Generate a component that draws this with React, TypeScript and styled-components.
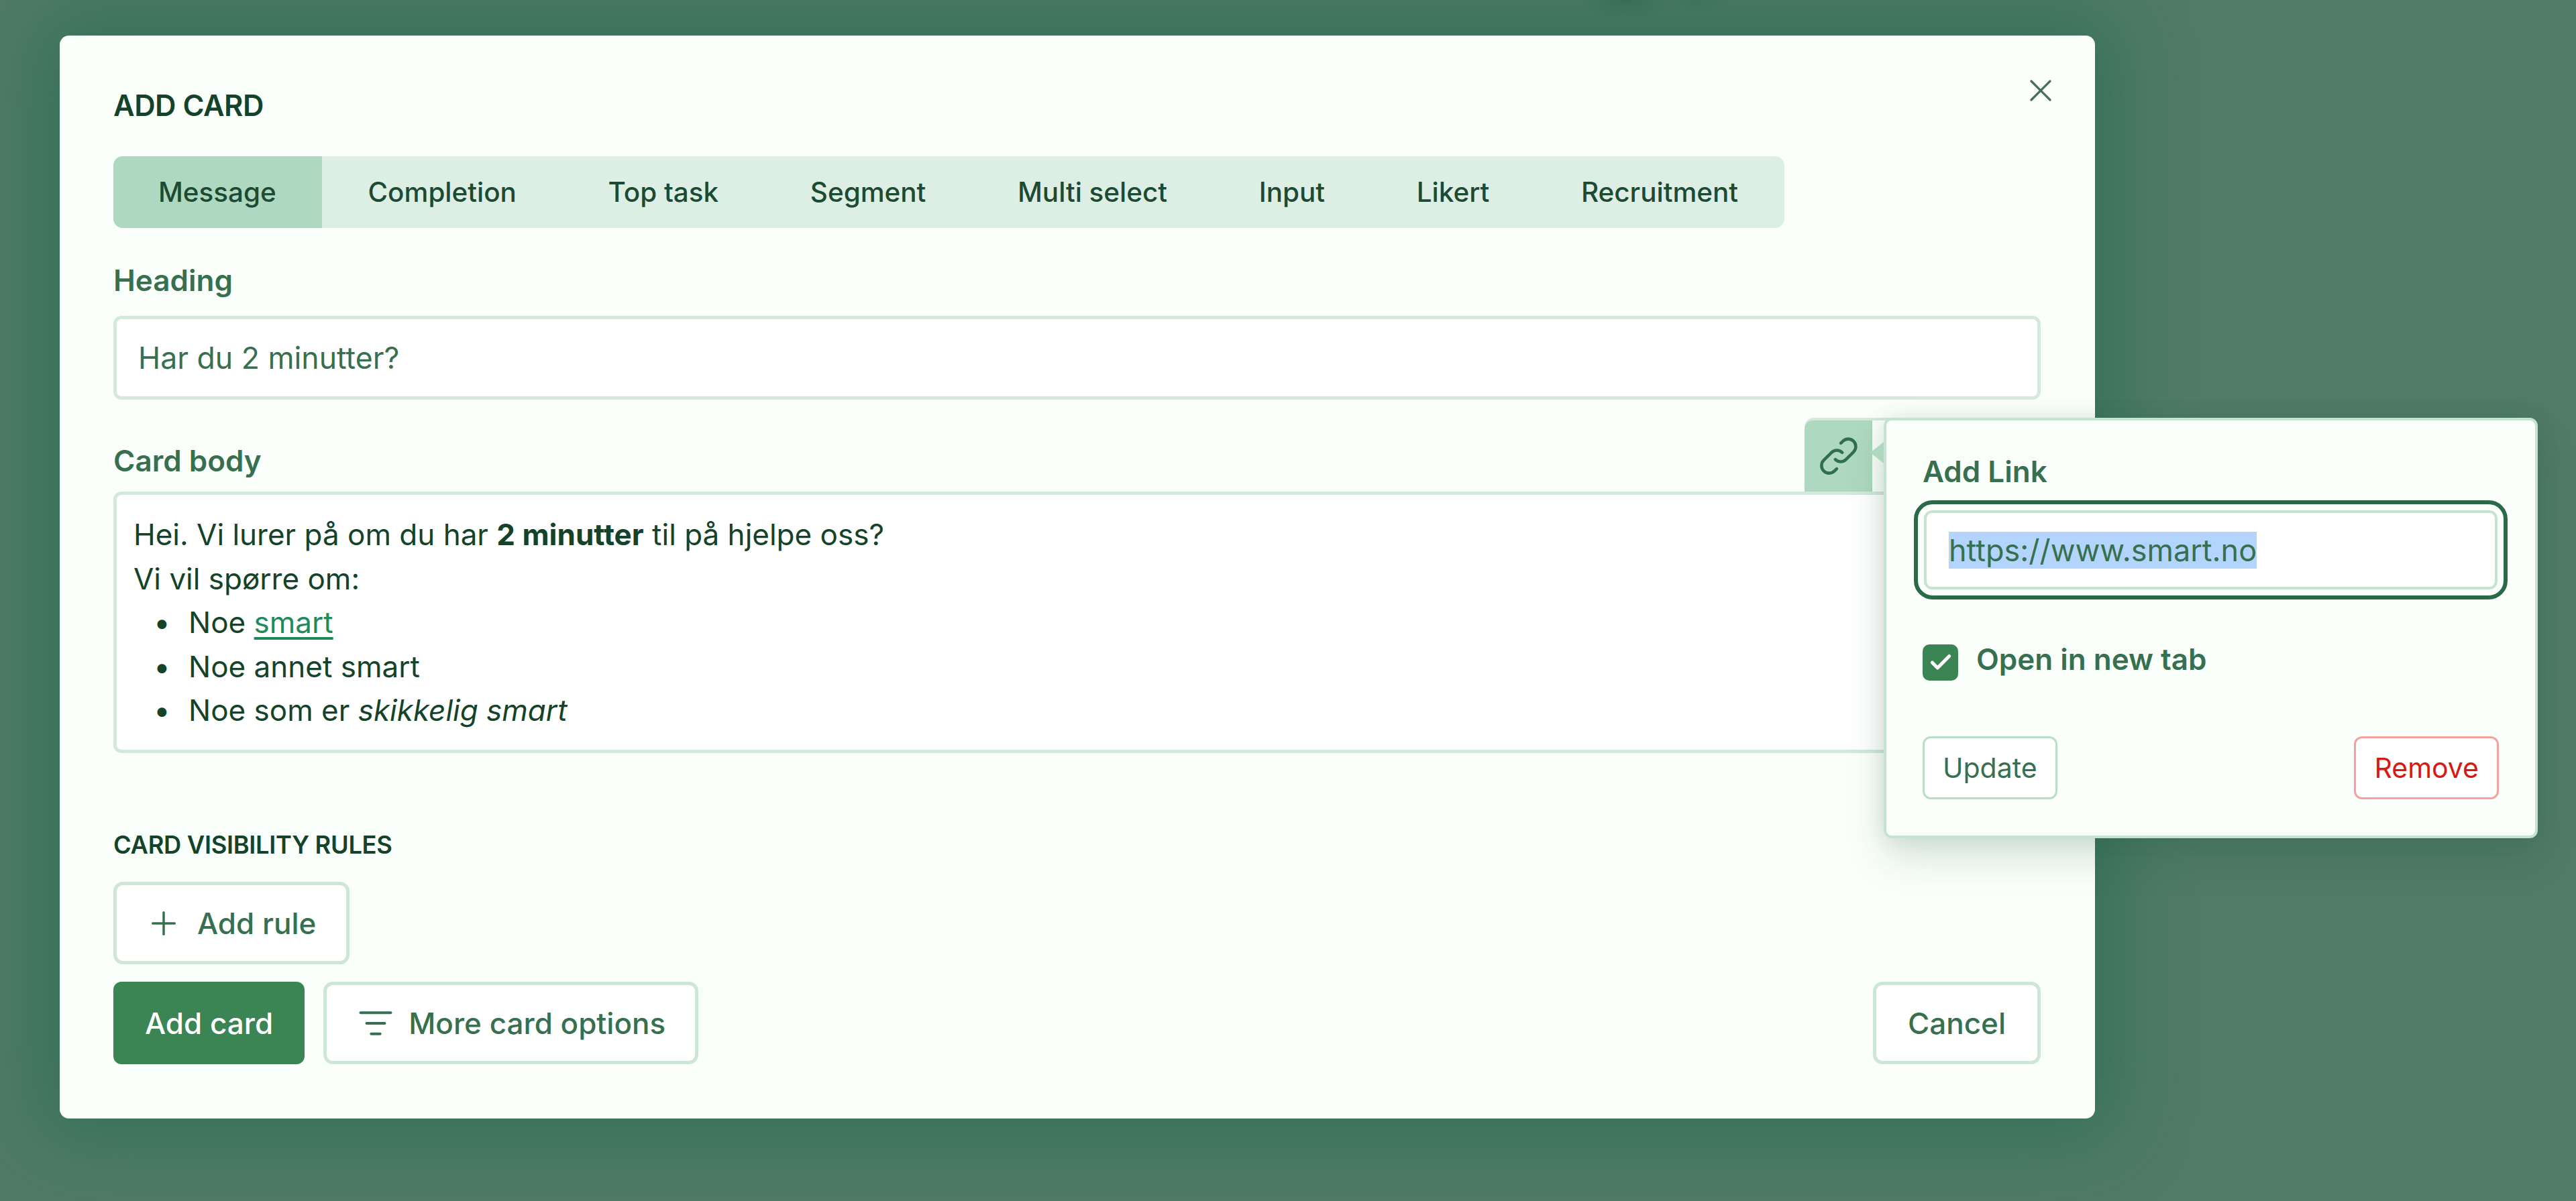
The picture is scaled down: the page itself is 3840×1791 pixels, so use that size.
import { useEffect, useRef } from "react";
import styled, { createGlobalStyle } from "styled-components";
import { Check, ListFilter, Plus, X } from "lucide-react";

const GlobalStyle = createGlobalStyle`
  html, body {
    margin: 0;
    height: 100%;
    background: #4f7a65;
  }
  * {
    box-sizing: border-box;
  }
  body {
    font-family: Inter, "Liberation Sans", sans-serif;
    color: #14432a;
  }
  #root {
    height: 100%;
  }
`;

const TABS = ["Message", "Completion", "Top task", "Segment", "Multi select", "Input", "Likert", "Recruitment"];

export default function App() {
  const urlRef = useRef<HTMLInputElement>(null);

  useEffect(() => {
    urlRef.current?.focus();
    urlRef.current?.select();
  }, []);

  return (
    <>
      <GlobalStyle />
      <Page>
        <Modal>
          <CloseButton aria-label="Close">
            <X size={56} strokeWidth={1.4} />
          </CloseButton>
          <Title>ADD CARD</Title>
          <Tabs>
            {TABS.map((tab, i) => (
              <Tab key={tab} $active={i === 0}>{tab}</Tab>
            ))}
          </Tabs>

          <Label>Heading</Label>
          <TextInput defaultValue="Har du 2 minutter?" />

          <BodyHeader>
            <BodyLabel>Card body</BodyLabel>
            <Toolbar>
              <ToolButton aria-label="Link">
                <svg width="68" height="68" viewBox="0 0 24 24" fill="none" stroke="currentColor" strokeWidth="1.6" strokeLinecap="round" strokeLinejoin="round">
                  <path d="M13.828 10.172a4 4 0 00-5.656 0l-4 4a4 4 0 105.656 5.656l1.102-1.101m-.758-4.899a4 4 0 005.656 0l4-4a4 4 0 00-5.656-5.656l-1.1 1.1" />
                </svg>
              </ToolButton>
              <Popover>
                <PopoverLabel>Add Link</PopoverLabel>
                <FocusRing>
                  <UrlInput ref={urlRef} defaultValue="https://www.smart.no" />
                </FocusRing>
                <CheckRow>
                  <CheckBox>
                    <Check size={38} strokeWidth={3.2} />
                  </CheckBox>
                  <CheckLabel>Open in new tab</CheckLabel>
                </CheckRow>
                <PopoverActions>
                  <SmallButton>Update</SmallButton>
                  <SmallButton $danger>Remove</SmallButton>
                </PopoverActions>
              </Popover>
            </Toolbar>
          </BodyHeader>
          <Editor>
            <div>Hei. Vi lurer på om du har <strong>2 minutter</strong> til på hjelpe oss?</div>
            <div>Vi vil spørre om:</div>
            <BulletList>
              <li>Noe <EditorLink>smart</EditorLink></li>
              <li>Noe annet smart</li>
              <li>Noe som er <em>skikkelig smart</em></li>
            </BulletList>
          </Editor>

          <RulesHeading>CARD VISIBILITY RULES</RulesHeading>
          <RuleButton>
            <Plus size={56} strokeWidth={1.5} />
            Add rule
          </RuleButton>

          <Footer>
            <PrimaryButton>Add card</PrimaryButton>
            <OutlineButton>
              <ListFilter size={54} strokeWidth={1.7} />
              More card options
            </OutlineButton>
            <CancelButton>Cancel</CancelButton>
          </Footer>
        </Modal>
      </Page>
    </>
  );
}

const Page = styled.div`
  height: 1791px;
  overflow: hidden;
  padding: 53px 0 0 89px;
  background:
    radial-gradient(ellipse 70px 30px at 2424px 0, rgba(40, 100, 75, 0.5), transparent),
    radial-gradient(ellipse 50px 20px at 2530px 0, rgba(40, 100, 75, 0.25), transparent),
    #507b66;
`;

const Modal = styled.div`
  position: relative;
  width: 3034px;
  height: 1615px;
  padding: 72px 81px 81px 80px;
  background: #fbfffc;
  border-radius: 14px;
  box-shadow: 0 0 110px 22px rgba(40, 110, 80, 0.75);
`;

const CloseButton = styled.button`
  position: absolute;
  top: 54px;
  right: 53px;
  display: flex;
  padding: 0;
  border: 0;
  background: none;
  color: #456f5a;
`;

const Title = styled.h2`
  margin: 0 0 44px;
  font-size: 43.5px;
  line-height: 64px;
  font-weight: 600;
  letter-spacing: -0.5px;
  color: #14432a;
`;

const Tabs = styled.div`
  display: flex;
  width: 2491px;
  height: 107px;
  background: #ddefe4;
  border-radius: 14px;
  overflow: hidden;
`;

const Tab = styled.div<{ $active?: boolean }>`
  display: flex;
  align-items: center;
  flex: none;
  padding: 0 68.2px 0 67px;
  white-space: nowrap;
  font-size: 40.4px;
  font-weight: 500;
  color: #1c4a33;
  background: ${(p) => (p.$active ? "#aed8bf" : "transparent")};

  & + & {
    padding-left: 68.5px;
  }
`;

const Label = styled.div`
  margin: 46px 0 21px;
  font-size: 44px;
  line-height: 64px;
  font-weight: 600;
  color: #37704f;
`;

const TextInput = styled.input`
  display: block;
  width: 100%;
  height: 125px;
  padding: 0 32px;
  border: 5px solid #d2e9dc;
  border-radius: 12px;
  background: #fff;
  font: 400 44.6px Inter, sans-serif;
  color: #37704f;
  outline: none;
`;

const BodyHeader = styled.div`
  display: flex;
  align-items: flex-end;
  justify-content: space-between;
  height: 110px;
  margin-top: 27px;
`;

const BodyLabel = styled.div`
  padding-bottom: 14px;
  font-size: 44px;
  line-height: 64px;
  font-weight: 600;
  color: #37704f;
`;

const Toolbar = styled.div`
  position: relative;
  width: 352px;
  height: 110px;
  border-top: 4px solid #d2e9dc;
  border-radius: 14px 14px 0 0;
`;

const ToolButton = styled.button`
  display: flex;
  align-items: center;
  justify-content: center;
  width: 101px;
  height: 106px;
  padding: 0;
  border: 0;
  border-radius: 12px 0 0 0;
  background: #aed8bf;
  color: #2f6f4d;
`;

const Popover = styled.div`
  position: absolute;
  z-index: 2;
  top: -4px;
  left: 118px;
  width: 975px;
  height: 627px;
  padding: 44px 54px 0;
  background: #fbfffc;
  border: 4px solid #c6e3d2;
  border-radius: 12px;
  box-shadow: 0 0 30px rgba(30, 80, 60, 0.12), 0 30px 60px rgba(30, 80, 60, 0.16);

  &::before {
    content: "";
    position: absolute;
    top: 32px;
    left: -24px;
    width: 0;
    height: 0;
    border-style: solid;
    border-width: 16px 20px 16px 0;
    border-color: transparent #aed8bf transparent transparent;
  }
`;

const PopoverLabel = styled.div`
  margin-bottom: 11px;
  font-size: 44px;
  line-height: 64px;
  font-weight: 600;
  color: #37704f;
`;

const FocusRing = styled.div`
  margin: 0 -13px;
  padding: 9px;
  border: 6px solid #2a6a49;
  border-radius: 28px;
`;

const UrlInput = styled.input`
  display: block;
  width: 100%;
  height: 118px;
  padding: 0 33px;
  border: 4px solid #c6e3d2;
  border-radius: 12px;
  background: #fff;
  font: 400 45px Inter, sans-serif;
  color: #37704f;
  outline: none;

  &::selection {
    background: #b3d5fd;
  }
`;

const CheckRow = styled.div`
  display: flex;
  align-items: flex-start;
  gap: 27px;
  margin-top: 67px;
`;

const CheckBox = styled.span`
  display: flex;
  align-items: center;
  justify-content: center;
  width: 53px;
  height: 54px;
  border-radius: 10px;
  background: #3a8553;
  color: #fff;
`;

const CheckLabel = styled.span`
  font-size: 44px;
  line-height: 44px;
  font-weight: 600;
  color: #37704f;
`;

const PopoverActions = styled.div`
  display: flex;
  justify-content: space-between;
  margin-top: 83px;
`;

const SmallButton = styled.button<{ $danger?: boolean }>`
  height: 94px;
  padding: 0 27px;
  border: 3px solid ${(p) => (p.$danger ? "#f2a3a0" : "#b9ddc8")};
  border-radius: 12px;
  background: #fff;
  font: 400 41px Inter, sans-serif;
  color: ${(p) => (p.$danger ? "#d9190f" : "#37704f")};
`;

const Editor = styled.div`
  height: 390px;
  padding: 27px 25px 0;
  border: 5px solid #d2e9dc;
  border-radius: 12px;
  background: #fff;
  font-size: 44px;
  line-height: 65.5px;
  color: #14432a;

  strong {
    font-weight: 700;
  }
`;

const BulletList = styled.ul`
  margin: 0;
  padding: 0 0 0 82px;
  list-style: none;

  li::before {
    content: "•";
    display: inline-block;
    width: 52px;
    margin-left: -52px;
  }
`;

const EditorLink = styled.a`
  color: #1f8a5a;
  text-decoration: underline;
  text-underline-offset: 6px;
`;

const RulesHeading = styled.div`
  margin: 112px 0 30px;
  font-size: 36.3px;
  line-height: 50px;
  font-weight: 600;
  letter-spacing: -0.3px;
  color: #14432a;
`;

const OutlineButton = styled.button`
  display: inline-flex;
  align-items: center;
  gap: 22px;
  height: 123px;
  padding: 0 44px 0 46px;
  border: 5px solid #cde6d8;
  border-radius: 14px;
  background: #fff;
  font: 500 44px Inter, sans-serif;
  color: #37704f;
`;

const RuleButton = styled(OutlineButton)`
  width: 352px;
  padding: 0 0 0 42px;
`;

const CancelButton = styled(OutlineButton)`
  margin-left: auto;
  padding: 0 46px;
  width: 250px;
  justify-content: center;
`;

const PrimaryButton = styled.button`
  height: 123px;
  padding: 0 47px;
  border: 0;
  border-radius: 12px;
  background: #3a8553;
  font: 500 44px Inter, sans-serif;
  color: #fff;
`;

const Footer = styled.div`
  display: flex;
  gap: 28px;
  margin-top: 26px;
`;
